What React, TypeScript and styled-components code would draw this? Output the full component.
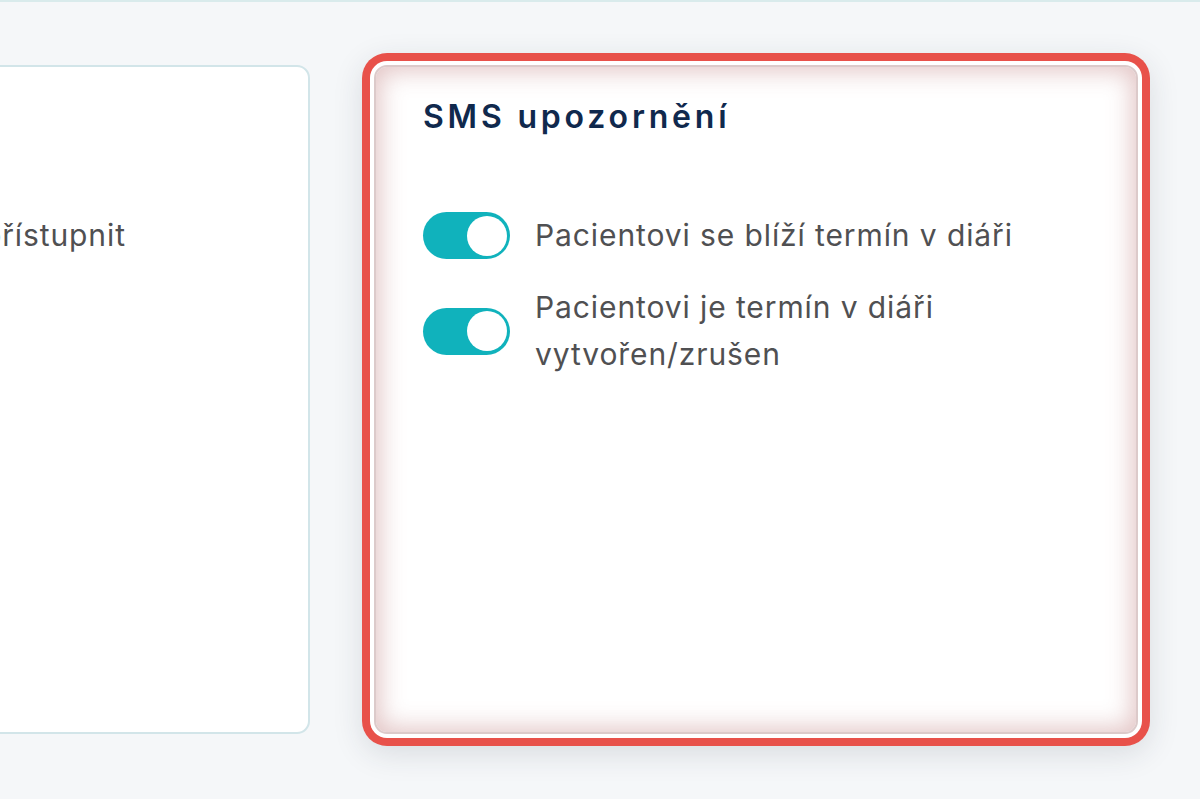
import styled, { createGlobalStyle } from "styled-components";

const GlobalStyle = createGlobalStyle`
  html, body {
    margin: 0;
    padding: 0;
    background: #f5f7f9;
    font-family: Inter, "Noto Sans", sans-serif;
    overflow: hidden;
  }
  * { box-sizing: border-box; }
`;

type Setting = { id: string; label: string; on: boolean };

const portal: Setting[] = [
  { id: "results", label: "Pacientům údaje zpřístupnit", on: true },
];

const sms: Setting[] = [
  { id: "upcoming", label: "Pacientovi se blíží termín v diáři", on: true },
  {
    id: "created",
    label: "Pacientovi je termín v diáři vytvořen/zrušen",
    on: true,
  },
];

const SettingsCard = ({
  title,
  items,
  highlighted,
}: {
  title: string;
  items: Setting[];
  highlighted?: boolean;
}) => (
  <Card $highlighted={highlighted}>
    <Title>{title}</Title>
    <Body>
      {items.map((s) => (
        <Row key={s.id}>
          <Toggle $on={s.on} aria-checked={s.on} role="switch">
            <Knob />
          </Toggle>
          <Label>{s.label}</Label>
        </Row>
      ))}
    </Body>
  </Card>
);

const App = () => {
  return (
    <>
      <GlobalStyle />
      <Page>
        <TopEdge />
        <Cards>
          <SettingsCard title="Pacientský portál" items={portal} />
          <SettingsCard title="SMS upozornění" items={sms} highlighted />
        </Cards>
      </Page>
    </>
  );
};

export default App;

const Page = styled.div`
  width: 1200px;
  height: 799px;
  overflow: hidden;
  display: flex;
  flex-direction: column;
`;

const TopEdge = styled.div`
  height: 2px;
  background: #d9ebec;
`;

const Cards = styled.div`
  display: grid;
  grid-template-columns: 764px 764px;
  column-gap: 64px;
  margin: 63px 0 0 -454px;
`;

const Card = styled.section<{ $highlighted?: boolean }>`
  height: 669px;
  padding: 30px 47px;
  background: #fff;
  border-radius: 13px;
  border: 2px solid ${(p) => (p.$highlighted ? "#dccaca" : "#d2e5e9")};
  box-shadow: ${(p) =>
    p.$highlighted
      ? `0 0 0 4px #fff, 0 0 0 12px #e8514a, 0 8px 30px 12px rgba(40, 50, 60, 0.13),
         inset 0 0 24px 4px rgba(190, 125, 125, 0.45)`
      : "none"};
`;

const Title = styled.h2`
  margin: 0;
  font-size: 32px;
  font-weight: 600;
  line-height: 40px;
  color: #10294d;
  letter-spacing: 3.8px;
  white-space: nowrap;
`;

const Body = styled.div`
  display: flex;
  flex-direction: column;
  gap: 25px;
  padding-top: 75px;
`;

const Row = styled.div`
  display: flex;
  align-items: center;
  gap: 25px;
`;

const Toggle = styled.div<{ $on: boolean }>`
  flex: none;
  width: 87px;
  height: 47px;
  border-radius: 24px;
  background: ${(p) => (p.$on ? "#10b2bc" : "#c9d3d8")};
  display: flex;
  align-items: center;
  justify-content: ${(p) => (p.$on ? "flex-end" : "flex-start")};
  padding: 0 3px;
`;

const Knob = styled.span`
  width: 40px;
  height: 40px;
  border-radius: 50%;
  background: #fff;
`;

const Label = styled.span`
  font-size: 30px;
  line-height: 47px;
  letter-spacing: 0.9px;
  color: #505052;
  max-width: 500px;
`;
